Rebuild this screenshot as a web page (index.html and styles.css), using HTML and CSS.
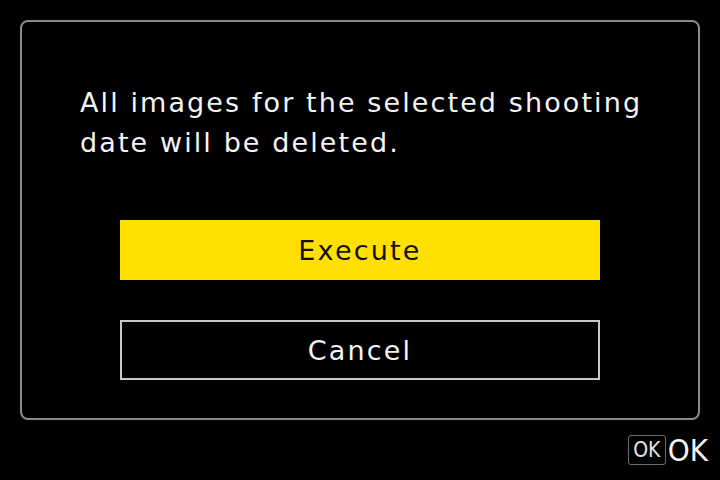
FILE: index.html
```html
<!DOCTYPE html>
<html lang="en">
<head>
    <meta charset="UTF-8">
    <meta name="viewport" content="width=device-width, initial-scale=1.0">
    <title>Delete Images</title>
    <link rel="stylesheet" href="styles.css">
</head>
<body>
    <div class="dialog">
        <p class="message">All images for the selected shooting date will be deleted.</p>
        <div class="actions">
            <button class="btn btn-execute">Execute</button>
            <button class="btn btn-cancel">Cancel</button>
        </div>
    </div>
    <div class="footer">
        <span class="key">OK</span>
        <span class="key-label">OK</span>
    </div>
</body>
</html>
```

FILE: styles.css
```css
body {
    margin: 0;
    width: 720px;
    height: 480px;
    background-color: #000;
    color: #fff;
    font-family: "DejaVu Sans", sans-serif;
    overflow: hidden;
}
.dialog {
    box-sizing: border-box;
    width: 680px;
    height: 400px;
    margin: 20px 0 0 20px;
    border: 2px solid #8a8a8a;
    border-radius: 8px;
    padding: 61px 0 0 58px;
}
.message {
    margin: 0;
    width: 590px;
    font-size: 27px;
    line-height: 40px;
    letter-spacing: 2.1px;
    color: #f4f4f4;
}
.actions {
    display: flex;
    flex-direction: column;
    align-items: center;
    gap: 40px;
    margin: 57px 0 0 -58px;
}
.btn {
    box-sizing: border-box;
    width: 480px;
    height: 60px;
    font-family: inherit;
    font-size: 27px;
    letter-spacing: 2.2px;
    border-radius: 0;
    padding: 0;
}
.btn-execute {
    background-color: #ffe000;
    border: none;
    color: #111;
}
.btn-cancel {
    background-color: #000;
    border: 2px solid #c8c8c8;
    color: #f4f4f4;
}
.footer {
    display: flex;
    justify-content: flex-end;
    align-items: center;
    gap: 2px;
    padding: 15px 12px 0 0;
}
.key {
    box-sizing: border-box;
    width: 38px;
    height: 30px;
    border: 1px solid #6e6e6e;
    border-radius: 3px;
    font-family: "DejaVu Sans Condensed", "DejaVu Sans", sans-serif;
    font-size: 21px;
    line-height: 28px;
    text-align: center;
    color: #e4e4e4;
}
.key-label {
    font-family: "DejaVu Sans Condensed", "DejaVu Sans", sans-serif;
    font-size: 31px;
    line-height: 30px;
    color: #f4f4f4;
}
```
